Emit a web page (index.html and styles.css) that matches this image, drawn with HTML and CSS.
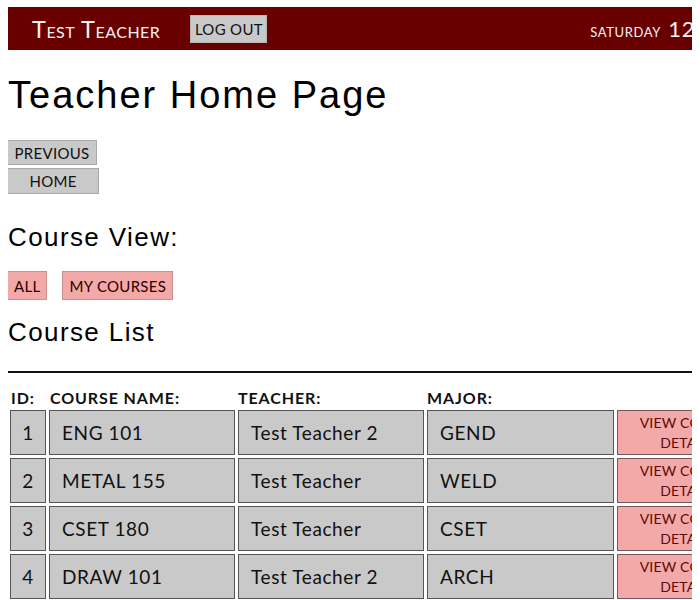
FILE: index.html
```html
<!DOCTYPE html>
<html>
<head>
<meta charset="utf-8">
<title>Teacher Home Page</title>
<link rel="stylesheet" href="styles.css">
</head>
<body>
<div class="page">
  <header class="topbar">
    <span class="user">Test Teacher</span>
    <button class="logout">LOG OUT</button>
    <span class="date">saturday <b>12</b></span>
  </header>

  <h1 class="title">Teacher Home Page</h1>

  <nav class="navbtns">
    <button class="btn gray prev">PREVIOUS</button>
    <button class="btn gray home">HOME</button>
  </nav>

  <h2 class="section">Course View:</h2>
  <div class="views">
    <button class="btn pink all">ALL</button>
    <button class="btn pink">MY COURSES</button>
  </div>

  <h2 class="section list">Course List</h2>
  <hr class="rule">

  <table class="courses">
    <thead>
      <tr><th class="c-id">ID:</th><th class="c-name">Course Name:</th><th class="c-teacher">Teacher:</th><th class="c-major">Major:</th><th></th></tr>
    </thead>
    <tbody>
      <tr><td class="id">1</td><td>ENG 101</td><td>Test Teacher 2</td><td>GEND</td><td class="view">VIEW COURSE DETAILS</td></tr>
      <tr><td class="id">2</td><td>METAL 155</td><td>Test Teacher</td><td>WELD</td><td class="view">VIEW COURSE DETAILS</td></tr>
      <tr><td class="id">3</td><td>CSET 180</td><td>Test Teacher</td><td>CSET</td><td class="view">VIEW COURSE DETAILS</td></tr>
      <tr><td class="id">4</td><td>DRAW 101</td><td>Test Teacher 2</td><td>ARCH</td><td class="view">VIEW COURSE DETAILS</td></tr>
    </tbody>
  </table>
</div>
</body>
</html>
```

FILE: styles.css
```css
html {
  overflow: hidden;
}
body {
  margin: 7px 8px 8px;
  background: #ffffff;
  color: #000;
  font-family: Lato, "Liberation Sans", sans-serif;
}
.page {
  width: 780px;
}
.topbar {
  display: flex;
  align-items: center;
  height: 43px;
  background: #690000;
  padding: 0 93px 0 24px;
  box-sizing: border-box;
}
.user {
  color: #f4f0f0;
  font-variant: small-caps;
  font-size: 23.5px;
  letter-spacing: 0.5px;
}
.logout {
  margin-left: 30px;
  height: 28px;
  width: 77px;
  padding: 0;
  background: #c9c9c9;
  border: 1px solid #b5b5b5;
  font-family: Lato, sans-serif;
  font-size: 15px;
  letter-spacing: 0.3px;
  color: #111;
  margin-top: 1px;
}
.date {
  margin-left: auto;
  color: #f4f0f0;
  font-variant: small-caps;
  font-size: 18.5px;
  letter-spacing: 0.6px;
}
.date b {
  font-weight: normal;
  font-size: 22px;
  margin-left: 2px;
}
.title {
  font-family: "Liberation Sans", Arial, sans-serif;
  font-weight: normal;
  font-size: 38px;
  letter-spacing: 2px;
  margin: 23px 0 0;
  line-height: 44px;
}
.navbtns {
  display: flex;
  flex-direction: column;
  align-items: flex-start;
  gap: 3px;
  margin-top: 23px;
}
.btn {
  font-family: Lato, sans-serif;
  font-size: 15px;
  letter-spacing: 0.3px;
  color: #111;
  padding: 0;
  margin: 0;
  margin-left: -1px;
}
.gray {
  background: #c9c9c9;
  border: 1px solid #a9a9a9;
}
.prev {
  width: 90px;
  height: 25px;
}
.home {
  width: 92px;
  height: 26px;
}
.section {
  font-family: "Liberation Sans", Arial, sans-serif;
  font-weight: normal;
  font-size: 26px;
  letter-spacing: 1.4px;
  line-height: 32px;
  margin: 27px 0 0;
}
.views {
  display: flex;
  gap: 16px;
  margin-top: 18px;
}
.pink {
  background: #f4a9a9;
  border: 1px solid #c99090;
  height: 29px;
  padding: 0 6px;
  color: #2a0000;
}
.section.list {
  margin-top: 16px;
}
.rule {
  border: 0;
  height: 2px;
  background: #111;
  margin: 23px 0 0;
}
.courses {
  border-collapse: separate;
  border-spacing: 3px;
  margin-left: -1px;
  margin-top: 12px;
}
.courses th {
  text-align: left;
  font-weight: 700;
  font-size: 16px;
  text-transform: uppercase;
  letter-spacing: 0.9px;
  padding: 0;
  height: 18px;
  vertical-align: bottom;
  color: #111;
}
.courses th.c-id { padding-left: 1px; }
.courses th.c-name { padding-left: 1px; }
.c-id { width: 35px; }
.c-name { width: 185px; }
.c-teacher { width: 186px; }
.c-major { width: 187px; }
.courses td {
  background: #c9c9c9;
  border: 1px solid #555;
  height: 45px;
  box-sizing: border-box;
  font-size: 19px;
  padding: 0 0 0 12px;
  color: #111;
  letter-spacing: 0.6px;
}
.courses td.id {
  padding: 0;
  text-align: center;
}
.courses td.view {
  background: #f4a9a9;
  color: #5a0a0a;
  font-size: 14px;
  text-align: center;
  width: 142px;
  padding: 0 4px;
  line-height: 20px;
  letter-spacing: 0.2px;
  border-color: #7a5555;
}
```
